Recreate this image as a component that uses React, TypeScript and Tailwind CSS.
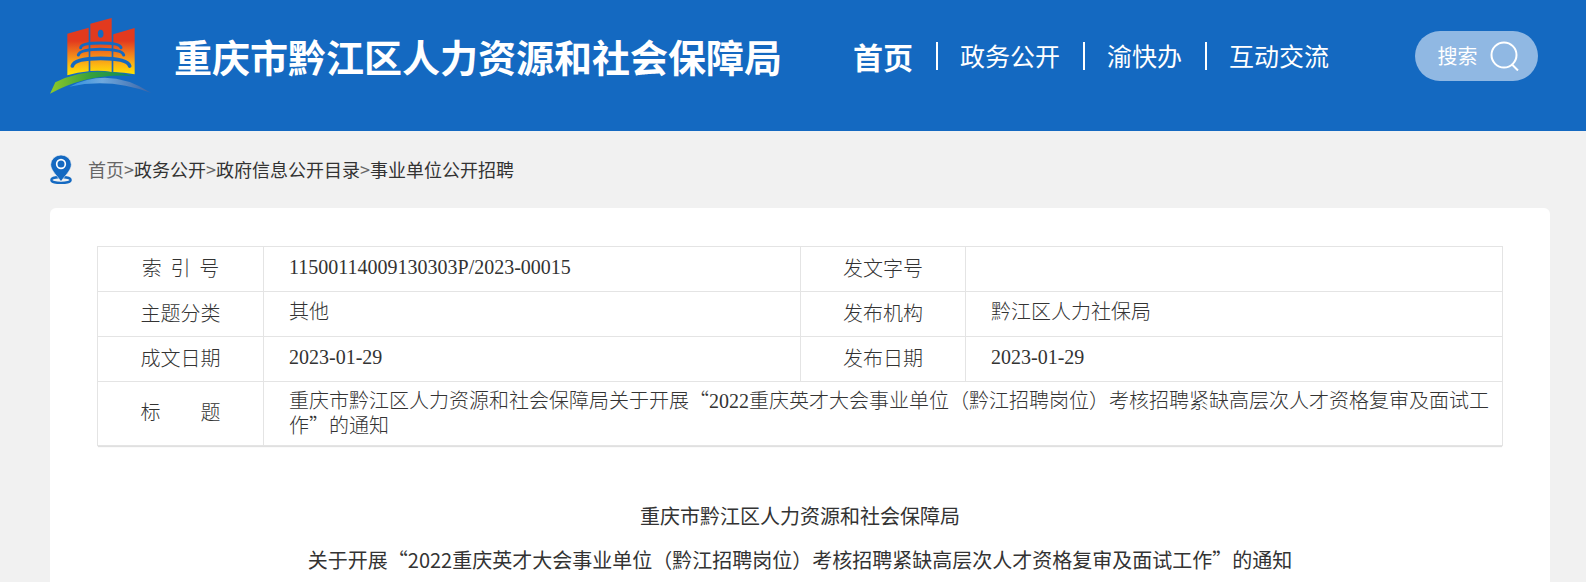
import React from "react";

const navItems = ["政务公开", "渝快办", "互动交流"];
const crumbs = ["政务公开", "政府信息公开目录", "事业单位公开招聘"];

function Logo() {
  return (
    <svg viewBox="27 21 309 231" className="h-[77px] w-[103px] shrink-0" aria-hidden="true">
      <defs>
        <linearGradient id="tower" gradientUnits="userSpaceOnUse" x1="0" y1="30" x2="0" y2="195">
          <stop offset="0.38" stopColor="#e23a1e" />
          <stop offset="0.6" stopColor="#f07a1c" />
          <stop offset="0.82" stopColor="#fcb813" />
          <stop offset="1" stopColor="#ffe600" />
        </linearGradient>
        <linearGradient id="hill" x1="0" y1="0" x2="1" y2="0">
          <stop offset="0" stopColor="#8fc92a" />
          <stop offset="0.5" stopColor="#36a03c" />
          <stop offset="1" stopColor="#0f8a5a" />
        </linearGradient>
        <linearGradient id="river" x1="0" y1="0" x2="1" y2="0">
          <stop offset="0" stopColor="#2d8fe0" />
          <stop offset="0.4" stopColor="#6fa9de" />
          <stop offset="1" stopColor="#3a62a4" />
        </linearGradient>
      </defs>
      <g fill="url(#tower)">
        <path d="M82 71 L146 53 V184 Q112 187 82 196 Z" />
        <path d="M151 41 L215 24 V186 Q183 180 151 183 Z" />
        <path d="M220 73 L284 54 V193 Q252 187 220 186 Z" />
      </g>
      <ellipse cx="182" cy="71" rx="8.500" ry="12" fill="#1469c1" />
      <g fill="none" stroke="#1469c1" strokeLinecap="round">
        <path d="M122 113 Q124 99 182 99 Q240 99 243 113" strokeWidth="9" />
        <path d="M115 135 Q120 118 182 118 Q245 118 251 135" strokeWidth="9" />
        <path d="M97 168 Q103 145 182 145 Q262 145 269 168" strokeWidth="11" />
      </g>
      <path d="M30 251 L46 217 Q150 164 275 197 Q140 190 30 251 Z" fill="url(#hill)" />
      <path d="M88 230 Q210 168 334 249 Q210 202 88 230 Z" fill="url(#river)" />
    </svg>
  );
}

function PinIcon() {
  return (
    <svg viewBox="60 75 66 87" className="h-[29px] w-[22px] shrink-0" aria-hidden="true">
      <ellipse cx="93" cy="150" rx="29" ry="9" fill="none" stroke="#1469c1" strokeWidth="7" />
      <path
        d="M93 155 C86 142 62 122 62 104 A31 29 0 0 1 124 104 C124 122 100 142 93 155 Z"
        fill="#1469c1"
        stroke="#f1f1f1"
        strokeWidth="2"
      />
      <circle cx="93" cy="102" r="13" fill="none" stroke="#fff" strokeWidth="5" />
    </svg>
  );
}

function SearchIcon() {
  return (
    <svg viewBox="0 0 30 30" className="h-[30px] w-[30px]" fill="none" stroke="#fff" strokeWidth="2" aria-hidden="true">
      <circle cx="14" cy="14" r="12.500" />
      <path d="M21.500 23 L28 29.500" />
    </svg>
  );
}

const labelCell = "border border-[#e4e4e4] px-0 pt-0 pb-1 text-center font-light";
const valueCell = "border border-[#e4e4e4] pt-0 pr-3 pb-1 pl-[25px]";
const latin = "font-['Liberation_Serif','Noto_Sans_CJK_SC',serif]";

function Row({ items }: { items: [string, string][] }) {
  return (
    <tr className="h-[45px]">
      {items.map(([label, value]) => (
        <React.Fragment key={label}>
          <th scope="row" className={labelCell + " whitespace-pre"}>{label}</th>
          <td className={valueCell + " " + latin}>{value}</td>
        </React.Fragment>
      ))}
    </tr>
  );
}

export default function App() {
  return (
    <div
      lang="zh-CN"
      className="min-h-screen bg-[#f1f1f1] font-['Noto_Sans_CJK_SC',sans-serif] text-[#333]"
    >
      <header className="flex h-[131px] items-start bg-[#1469c1] pr-12 pl-[49px] text-white">
        <div className="flex pt-[17px]">
          <Logo />
          <h1 className="ml-[22px] text-[38px] leading-[78px] font-bold whitespace-nowrap">
            重庆市黔江区人力资源和社会保障局
          </h1>
        </div>
        <nav className="ml-[71px] flex h-[112px] items-center text-[25px] whitespace-nowrap">
          <a href="#home" className="text-[30px] font-bold">首页</a>
          {navItems.map((item) => (
            <React.Fragment key={item}>
              <span className="mr-[22px] ml-[23px] h-7 w-[2px] bg-white" />
              <a href={"#" + item}>{item}</a>
            </React.Fragment>
          ))}
        </nav>
        <button
          type="button"
          className="mt-[31px] ml-auto flex h-[50px] w-[123px] shrink-0 items-center justify-center gap-3 rounded-full bg-[#90b8e3] pl-1 text-[20px]"
        >
          搜索
          <SearchIcon />
        </button>
      </header>

      <main className="pr-9 pl-[50px]">
        <nav className="flex h-[77px] items-center text-[18px] whitespace-nowrap" aria-label="当前位置">
          <PinIcon />
          <a href="#home" className="ml-4 text-[#666]">首页</a>
          {crumbs.map((item) => (
            <React.Fragment key={item}>
              <span className="text-[#666]">&gt;</span>
              <a href={"#" + item}>{item}</a>
            </React.Fragment>
          ))}
        </nav>

        <section className="min-h-[374px] rounded-t-md bg-white px-[47px] pt-[38px]">
          <table className="w-full table-fixed border-collapse text-[20px] leading-[25px] font-light shadow-[0_2px_1px_-1px_#e0e0e0]">
            <colgroup>
              <col className="w-[166px]" />
              <col />
              <col className="w-[165px]" />
              <col />
            </colgroup>
            <tbody>
              <Row items={[["索  引  号", "11500114009130303P/2023-00015"], ["发文字号", ""]]} />
              <Row items={[["主题分类", "其他"], ["发布机构", "黔江区人力社保局"]]} />
              <Row items={[["成文日期", "2023-01-29"], ["发布日期", "2023-01-29"]]} />
              <tr className="h-16">
                <th scope="row" className={labelCell}>标&emsp;&emsp;题</th>
                <td colSpan={3} className={valueCell}>
                  重庆市黔江区人力资源和社会保障局关于开展“<span className={"leading-none " + latin}>2022</span>重庆英才大会事业单位（黔江招聘岗位）考核招聘紧缺高层次人才资格复审及面试工作”的通知
                </td>
              </tr>
            </tbody>
          </table>
          <h2 className="mt-12 text-center text-[20px] leading-[44px] font-normal">
            重庆市黔江区人力资源和社会保障局
            <br />
            关于开展“2022重庆英才大会事业单位（黔江招聘岗位）考核招聘紧缺高层次人才资格复审及面试工作”的通知
          </h2>
        </section>
      </main>
    </div>
  );
}
